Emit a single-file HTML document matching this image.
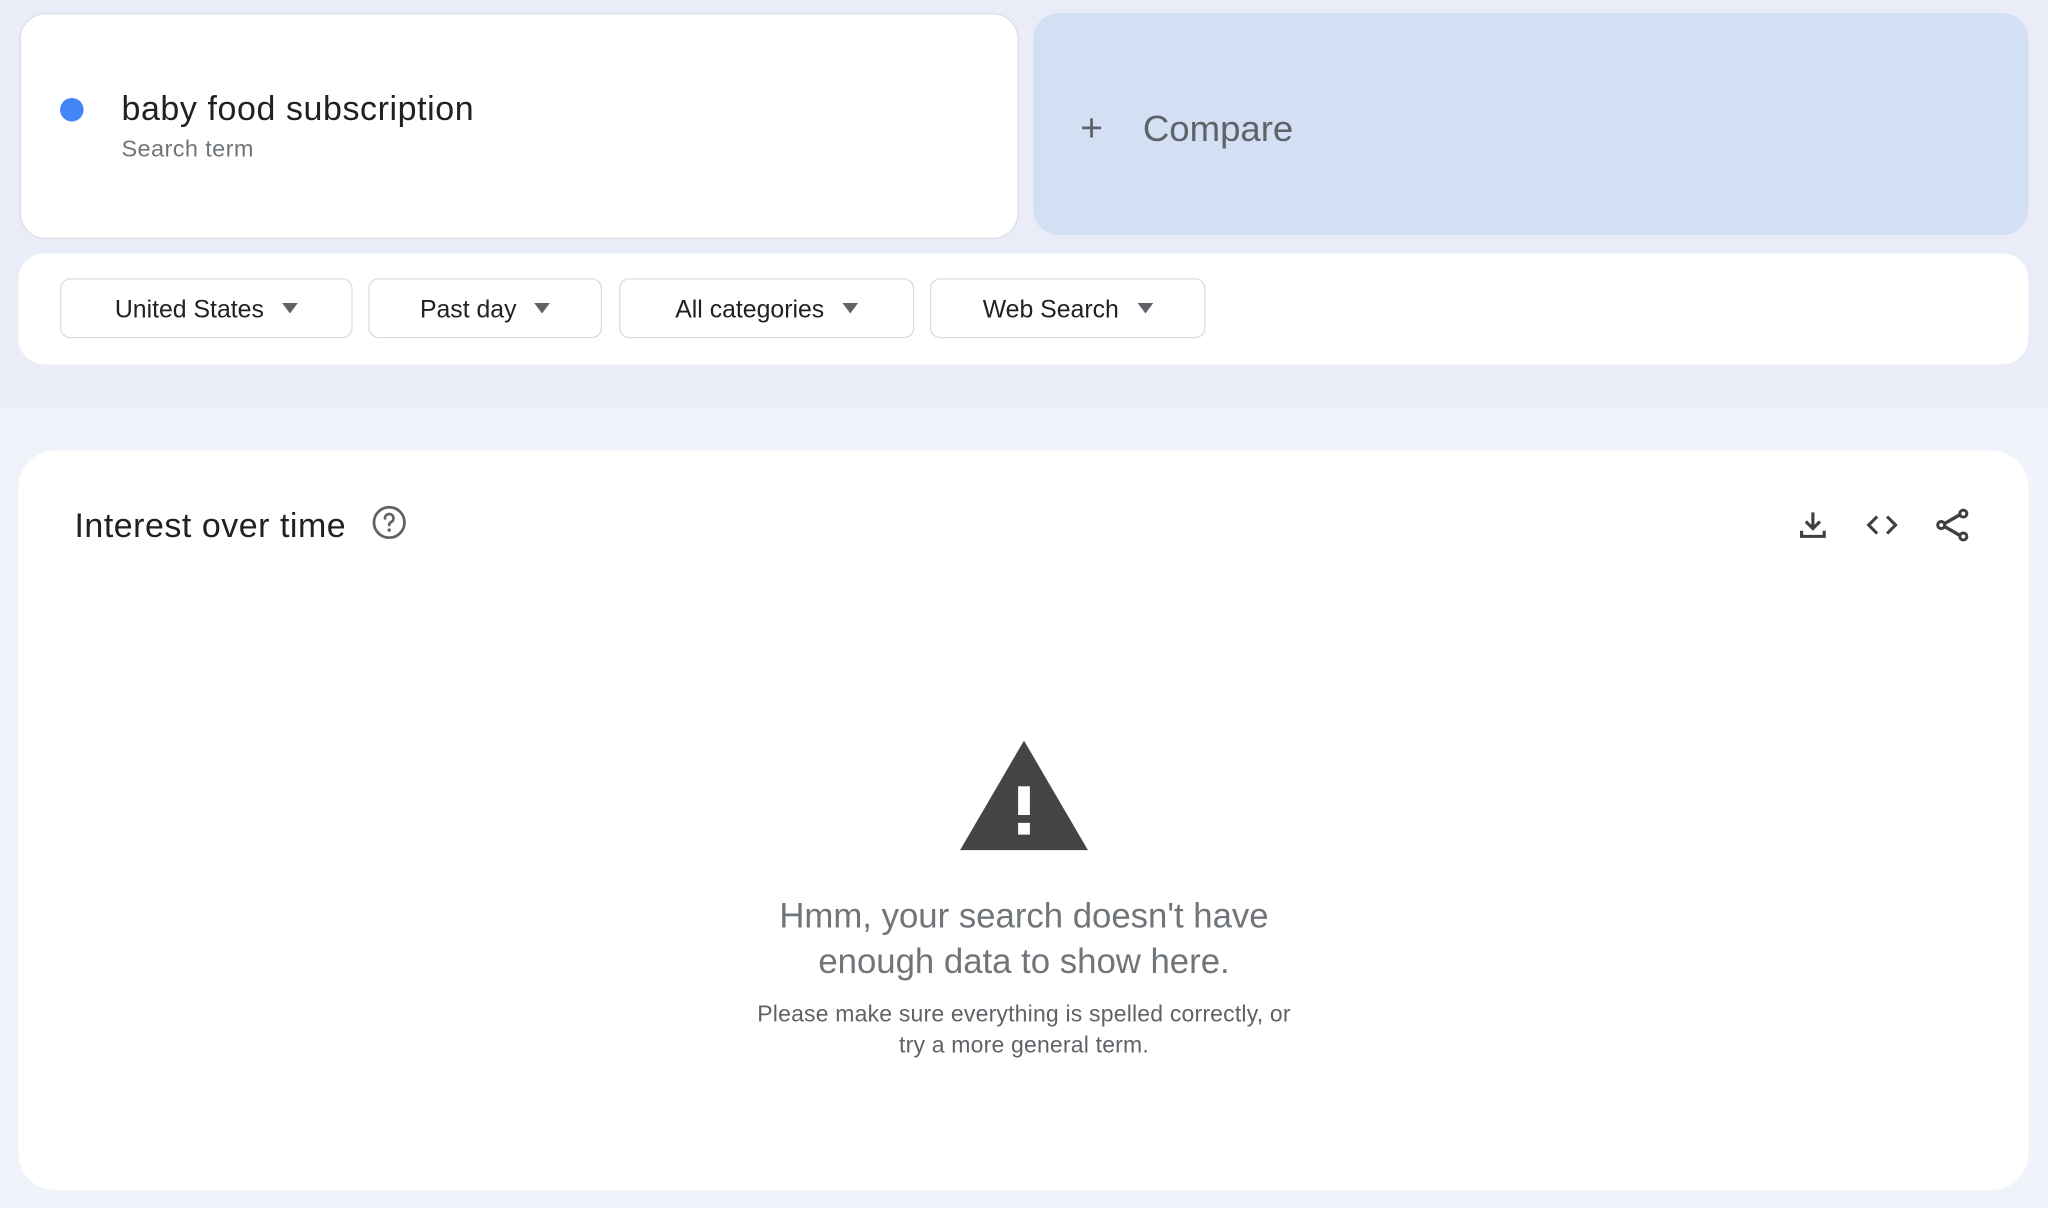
<!DOCTYPE html>
<html><head><meta charset="utf-8"><style>
html,body{margin:0;padding:0;width:2048px;height:1208px;overflow:hidden;background:#f0f3f9;}
#w{position:absolute;left:0;top:0;width:1568px;height:925px;transform:scale(1.30612);transform-origin:0 0;font-family:"Liberation Sans",sans-serif;background:#f0f3f9;}
.abs{position:absolute;}
.top{left:0;top:0;width:1568px;height:312px;background:#eaedf7;}
.card{background:#fff;}
.btn{position:absolute;top:213px;height:46px;border:1px solid #dadce0;border-radius:8px;background:#fff;font-size:19px;color:#202124;line-height:48px;text-align:center;box-sizing:border-box;}
.tri{display:inline-block;width:0;height:0;border-left:6px solid transparent;border-right:6px solid transparent;border-top:8px solid #5f6368;margin-left:14px;vertical-align:middle;position:relative;top:-2px;}
</style></head><body><div id="w">
<div class="abs top"></div>
<div class="abs card" style="left:15px;top:10px;width:763px;height:171px;border:1px solid #dcdfe4;border-radius:20px;"></div>
<div class="abs" style="left:46px;top:75px;width:18px;height:18px;border-radius:50%;background:#4285f4;"></div>
<div class="abs" style="left:93px;top:68px;font-size:26px;color:#202124;letter-spacing:0.45px;">baby food subscription</div>
<div class="abs" style="left:93px;top:104px;font-size:18px;color:#70757a;letter-spacing:0.3px;">Search term</div>
<div class="abs" style="left:791px;top:10px;width:762px;height:170px;background:#d3dff3;border-radius:20px;"></div>
<div class="abs" style="left:827px;top:84px;font-size:30px;color:#5f6368;line-height:30px;">+</div>
<div class="abs" style="left:875px;top:83px;font-size:28px;color:#5f6368;">Compare</div>
<div class="abs card" style="left:14px;top:194px;width:1539px;height:85px;border-radius:20px;"></div>
<div class="btn" style="left:46px;width:224px;">United States<span class="tri"></span></div>
<div class="btn" style="left:282px;width:179px;">Past day<span class="tri"></span></div>
<div class="btn" style="left:474px;width:226px;">All categories<span class="tri"></span></div>
<div class="btn" style="left:712px;width:211px;">Web Search<span class="tri"></span></div>
<div class="abs card" style="left:14px;top:345px;width:1539px;height:566px;border-radius:28px;"></div>
<div class="abs" style="left:57px;top:387px;font-size:26px;color:#202124;letter-spacing:0.4px;">Interest over time</div>
<svg class="abs" style="left:284px;top:386px" width="28" height="28" viewBox="0 0 24 24"><circle cx="12" cy="12" r="10" fill="none" stroke="#5f6368" stroke-width="1.8"/><path d="M9.2 9.3a2.8 2.8 0 1 1 4 2.5c-.8.4-1.2.9-1.2 1.9" fill="none" stroke="#5f6368" stroke-width="1.8" stroke-linecap="round"/><circle cx="12" cy="17" r="1.1" fill="#5f6368"/></svg>
<svg class="abs" style="left:1375px;top:389px" width="26" height="26" viewBox="0 0 24 24"><path d="M12 3v11M7 9.5l5 5 5-5M4 16v4h16v-4" fill="none" stroke="#3c4043" stroke-width="2.2"/></svg>
<svg class="abs" style="left:1428px;top:389px" width="26" height="26" viewBox="0 0 24 24"><path d="M8.5 6l-6 6 6 6M15.5 6l6 6-6 6" fill="none" stroke="#3c4043" stroke-width="2.2"/></svg>
<svg class="abs" style="left:1481px;top:388px" width="28" height="28" viewBox="0 0 24 24"><path d="M5 12l13-7.5M5 12l13 7.5" stroke="#3c4043" stroke-width="2.2"/><circle cx="19" cy="4.5" r="2.3" fill="#fff" stroke="#3c4043" stroke-width="2"/><circle cx="19" cy="19.5" r="2.3" fill="#fff" stroke="#3c4043" stroke-width="2"/><circle cx="4.5" cy="12" r="2.3" fill="#fff" stroke="#3c4043" stroke-width="2"/></svg>
<svg class="abs" style="left:735px;top:567px" width="98" height="84" viewBox="0 0 98 84"><path d="M49 0L98 84H0z" fill="#454545"/><rect x="44.5" y="35" width="9" height="22" fill="#fff"/><rect x="44.5" y="63" width="9" height="9" fill="#fff"/></svg>
<div class="abs" style="left:484px;top:684px;width:600px;text-align:center;font-size:26.6px;line-height:35px;color:#70757a;">Hmm, your search doesn't have<br>enough data to show here.</div>
<div class="abs" style="left:434px;top:764px;width:700px;text-align:center;font-size:17.6px;line-height:24px;color:#5f6368;letter-spacing:0.15px;">Please make sure everything is spelled correctly, or<br>try a more general term.</div>
</div></body></html>
